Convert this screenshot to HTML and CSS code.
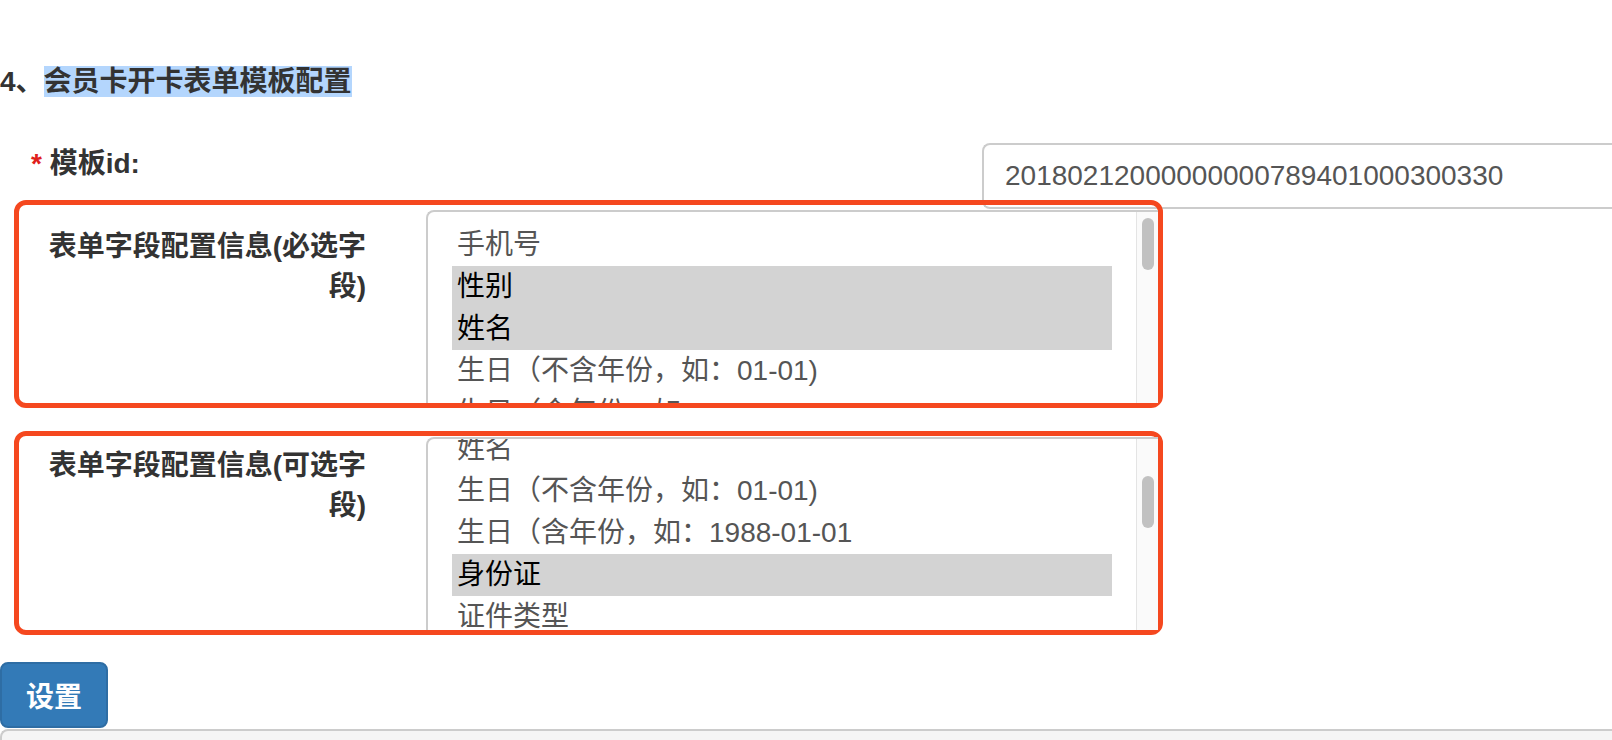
FILE: index.html
```html
<!DOCTYPE html>
<html lang="zh-CN">
<head>
<meta charset="utf-8">
<title>会员卡开卡表单模板配置</title>
<link rel="stylesheet" href="styles.css">
</head>
<body>
<h4 class="title">4、<span class="hl">会员卡开卡表单模板配置</span></h4>

<div class="row-id">
  <label class="id-label"><span class="star">*</span> 模板id:</label>
  <div class="input">20180212000000000789401000300330</div>
</div>

<div class="mark mark-a">
  <label class="field-label">表单字段配置信息(必选字段)</label>
  <div class="select">
    <div class="options">
      <div class="list">
        <div class="opt">手机号</div>
        <div class="opt sel">性别</div>
        <div class="opt sel">姓名</div>
        <div class="opt">生日（不含年份，如：01-01)</div>
        <div class="opt">生日（含年份，如：1988-01-01</div>
      </div>
    </div>
    <div class="track"><div class="thumb thumb-a"></div></div>
  </div>
</div>

<div class="mark mark-b">
  <label class="field-label">表单字段配置信息(可选字段)</label>
  <div class="select">
    <div class="options">
      <div class="list list-scrolled">
        <div class="opt">手机号</div>
        <div class="opt">性别</div>
        <div class="opt">姓名</div>
        <div class="opt">生日（不含年份，如：01-01)</div>
        <div class="opt">生日（含年份，如：1988-01-01</div>
        <div class="opt sel">身份证</div>
        <div class="opt">证件类型</div>
      </div>
    </div>
    <div class="track"><div class="thumb thumb-b"></div></div>
  </div>
</div>

<button class="btn" type="button">设置</button>

<div class="well"></div>
</body>
</html>
```

FILE: styles.css
```css
html, body {
  margin: 0;
  padding: 0;
  overflow: hidden;
  background: #fff;
}

body {
  font-family: "Liberation Sans", "Noto Sans CJK SC", sans-serif;
  font-size: 28px;
  line-height: 40px;
  color: #333;
}

.title {
  margin: 62px 0 0;
  font-size: 28px;
  line-height: 40px;
  font-weight: bold;
}

.hl {
  background: #b4d6fd;
}

.row-id {
  display: flex;
  align-items: flex-start;
  margin-top: 41px;
  height: 66px;
}

.id-label {
  flex: none;
  width: 982px;
  box-sizing: border-box;
  padding-left: 31px;
  padding-top: 1px;
  font-weight: bold;
}

.star {
  color: #e0201b;
}

.input {
  flex: 1;
  height: 66px;
  box-sizing: border-box;
  border: 2px solid #ccc;
  border-right: none;
  border-radius: 8px 0 0 8px;
  padding: 0 21px;
  display: flex;
  align-items: center;
  color: #555;
}

.mark {
  margin-left: 14px;
  width: 1149px;
  box-sizing: border-box;
  border: 5px solid #f5481f;
  border-radius: 12px;
  display: flex;
  align-items: flex-start;
  position: relative;
}

.mark-a {
  margin-top: -9px;
  padding-top: 5px;
}

.mark-b {
  margin-top: 23px;
  padding-top: 1px;
}

.field-label {
  flex: none;
  width: 330px;
  margin-left: 17px;
  text-align: right;
  font-weight: bold;
}

.mark-a .field-label {
  margin-top: 17px;
}

.mark-b .field-label {
  margin-top: 9px;
}

.select {
  flex: 1;
  margin-left: 60px;
  height: 193px;
  box-sizing: border-box;
  border: 2px solid #ccc;
  border-right: none;
  border-bottom: none;
  border-radius: 8px 0 0 0;
  display: flex;
  overflow: hidden;
  background: #fff;
}

.options {
  flex: 1;
  padding: 12px 24px 0;
  overflow: hidden;
}

.list-scrolled {
  margin-top: -107px;
}

.opt {
  height: 42px;
  line-height: 42px;
  padding-left: 5px;
  color: #555;
  white-space: nowrap;
}

.opt.sel {
  background: #d3d3d3;
  color: #000;
}

.track {
  flex: none;
  width: 22px;
  box-sizing: border-box;
  border-left: 1px solid #e4e4e4;
  background: #fafafa;
  display: flex;
  justify-content: center;
  align-items: flex-start;
}

.thumb {
  width: 12px;
  height: 52px;
  border-radius: 6px;
  background: #c1c1c1;
}

.thumb-a {
  margin-top: 6px;
}

.thumb-b {
  margin-top: 37px;
}

.btn {
  display: flex;
  align-items: center;
  justify-content: center;
  margin: 27px 0 0;
  width: 108px;
  height: 66px;
  box-sizing: border-box;
  padding: 0;
  background: #337ab7;
  border: 2px solid #2e6da4;
  border-radius: 8px;
  color: #fff;
  font-family: "Liberation Sans", "Noto Sans CJK SC", sans-serif;
  font-size: 28px;
  font-weight: bold;
}

.well {
  margin-top: 1px;
  height: 10px;
  border: 2px solid #ccc;
  border-right: none;
  border-bottom: none;
  border-radius: 8px 0 0 0;
  background: #f5f5f5;
}
```
